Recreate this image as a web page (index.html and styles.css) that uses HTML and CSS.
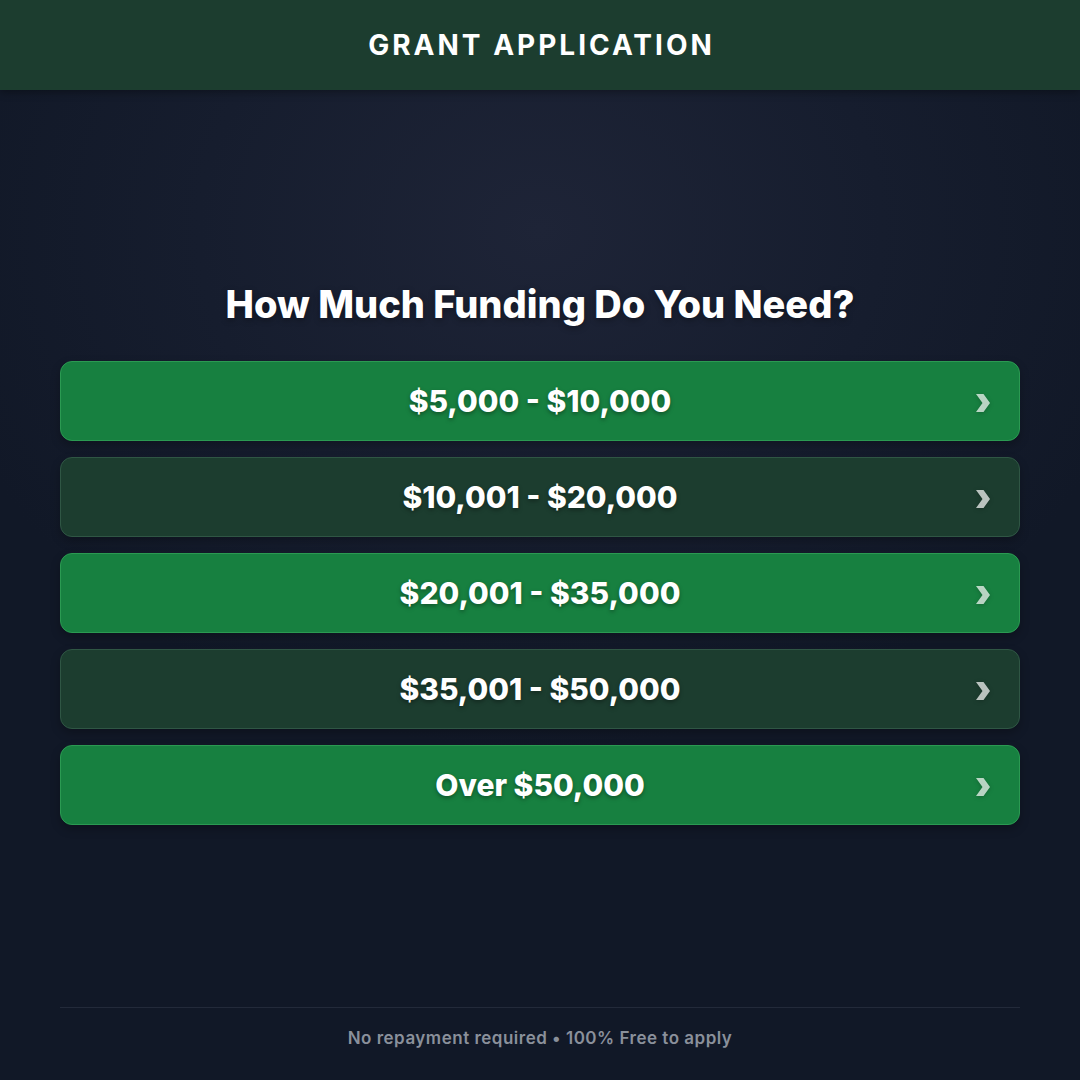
FILE: index.html
```html
<!DOCTYPE html>
<html lang="en">
<head>
<meta charset="utf-8">
<title>Grant Application</title>
<link rel="stylesheet" href="styles.css">
</head>
<body>
<div class="page">
  <header class="topbar">
    <h1 class="brand">GRANT APPLICATION</h1>
  </header>
  <main class="main">
    <h2 class="question">How Much Funding Do You Need?</h2>
    <div class="options">
      <a class="option option-green" href="#"><span class="label">$5,000 - $10,000</span><svg class="chev" viewBox="0 0 14 18" width="14" height="18"><polygon points="0,0 7.5,0 14,9 7.5,18 0,18 6.5,9" fill="currentColor"/></svg></a>
      <a class="option option-dark" href="#"><span class="label">$10,001 - $20,000</span><svg class="chev" viewBox="0 0 14 18" width="14" height="18"><polygon points="0,0 7.5,0 14,9 7.5,18 0,18 6.5,9" fill="currentColor"/></svg></a>
      <a class="option option-green" href="#"><span class="label">$20,001 - $35,000</span><svg class="chev" viewBox="0 0 14 18" width="14" height="18"><polygon points="0,0 7.5,0 14,9 7.5,18 0,18 6.5,9" fill="currentColor"/></svg></a>
      <a class="option option-dark" href="#"><span class="label">$35,001 - $50,000</span><svg class="chev" viewBox="0 0 14 18" width="14" height="18"><polygon points="0,0 7.5,0 14,9 7.5,18 0,18 6.5,9" fill="currentColor"/></svg></a>
      <a class="option option-green" href="#"><span class="label">Over $50,000</span><svg class="chev" viewBox="0 0 14 18" width="14" height="18"><polygon points="0,0 7.5,0 14,9 7.5,18 0,18 6.5,9" fill="currentColor"/></svg></a>
    </div>
  </main>
  <footer class="footer">
    <p class="note">No repayment required • 100% Free to apply</p>
  </footer>
</div>
</body>
</html>
```
FILE: styles.css
```css
* { box-sizing: border-box; }
html, body { margin: 0; padding: 0; }
body {
  font-family: Inter, "Noto Sans", "Liberation Sans", sans-serif;
  background: #111827;
  color: #fff;
}
.page {
  min-height: 1080px;
  height: 1080px;
  display: flex;
  flex-direction: column;
  background: radial-gradient(ellipse 620px 520px at 540px 230px, #1e2437 0%, #161d2e 55%, #111827 100%);
}
.topbar {
  height: 90px;
  flex: 0 0 90px;
  background: #1c3d2f;
  display: flex;
  align-items: center;
  justify-content: center;
  box-shadow: 0 2px 8px rgba(0,0,0,0.35);
}
.brand {
  margin: 0;
  font-size: 28px;
  font-weight: 700;
  letter-spacing: 3px;
  padding-left: 3px;
  color: #fff;
}
.main {
  flex: 1;
  display: flex;
  flex-direction: column;
  align-items: stretch;
  justify-content: center;
  padding: 8px 60px 0;
}
.question {
  margin: 0 0 34px;
  text-align: center;
  font-size: 38px;
  font-weight: 800;
  line-height: 46px;
  text-shadow: 0 2px 6px rgba(0,0,0,0.35);
}
.options {
  display: flex;
  flex-direction: column;
  gap: 16px;
}
.option {
  position: relative;
  height: 80px;
  border-radius: 12px;
  display: flex;
  align-items: center;
  justify-content: center;
  text-decoration: none;
  color: #fff;
  box-shadow: 0 4px 10px rgba(0,0,0,0.25);
}
.option-green {
  background: #178040;
  border: 1px solid #2b9a52;
}
.option-dark {
  background: #1c3d2f;
  border: 1px solid #2f5644;
}
.label {
  font-size: 30px;
  font-weight: 800;
  text-shadow: 0 2px 4px rgba(0,0,0,0.35);
}
.chev {
  position: absolute;
  right: 29px;
  top: 50%;
  margin-top: -7px;
  color: rgba(255,255,255,0.7);
  filter: drop-shadow(0 1px 2px rgba(0,0,0,0.3));
}
.footer {
  flex: 0 0 73px;
  margin: 0 60px;
  border-top: 1px solid #232a3a;
  display: flex;
  align-items: flex-start;
  justify-content: center;
  padding-top: 19px;
}
.note {
  margin: 0;
  font-size: 17px;
  line-height: 22px;
  font-weight: 600;
  letter-spacing: 0.5px;
  color: #8a909b;
}
```
